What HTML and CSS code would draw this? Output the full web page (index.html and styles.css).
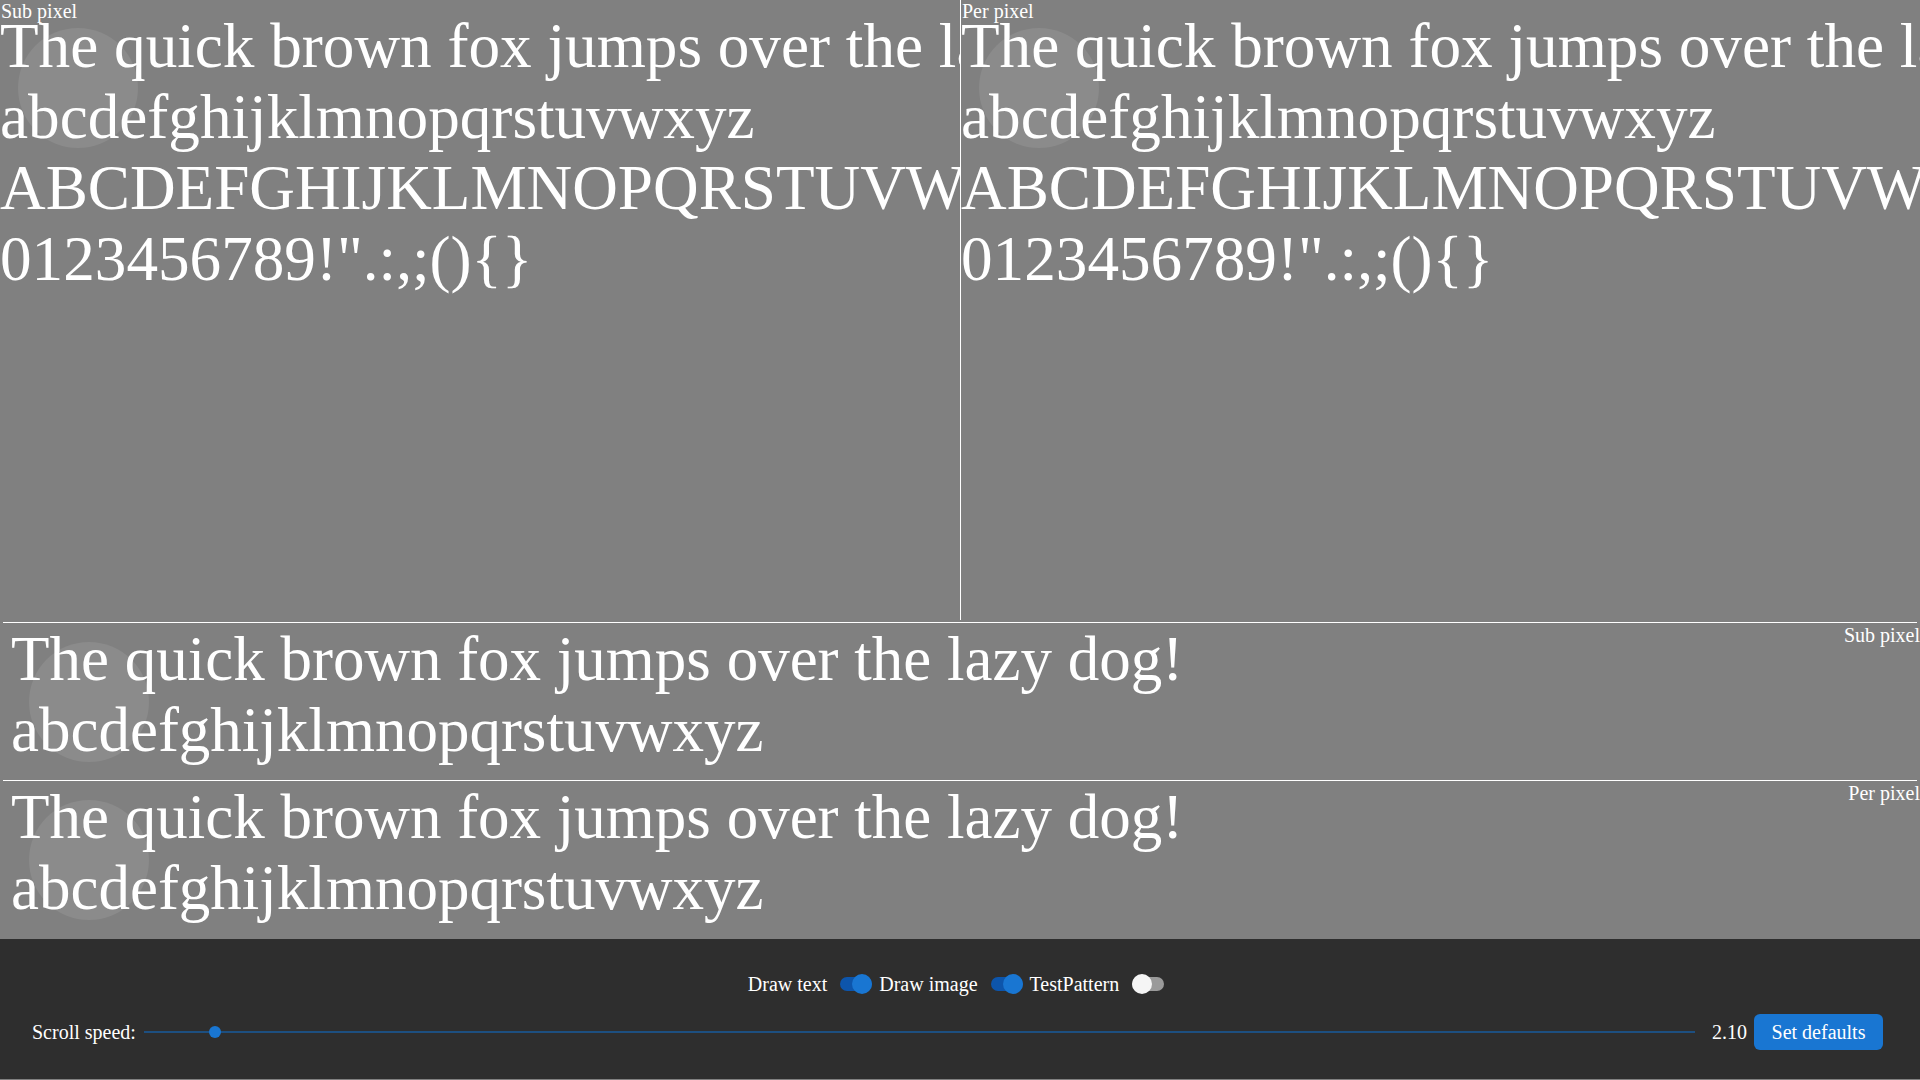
FILE: index.html
```html
<!DOCTYPE html>
<html lang="en">
<head>
<meta charset="utf-8">
<title>Text rendering test</title>
<link rel="stylesheet" href="styles.css">
</head>
<body>
<div class="page">
  <div class="top">
    <div class="panel panel-left">
      <div class="circle circle-top"></div>
      <div class="label">Sub pixel</div>
      <div class="big">
        <div class="line">The quick brown fox jumps over the lazy dog!</div>
        <div class="line">abcdefghijklmnopqrstuvwxyz</div>
        <div class="line">ABCDEFGHIJKLMNOPQRSTUVWXYZ</div>
        <div class="line">0123456789!".:,;(){}</div>
      </div>
    </div>
    <div class="panel panel-right">
      <div class="circle circle-top"></div>
      <div class="label">Per pixel</div>
      <div class="big">
        <div class="line">The quick brown fox jumps over the lazy dog!</div>
        <div class="line">abcdefghijklmnopqrstuvwxyz</div>
        <div class="line">ABCDEFGHIJKLMNOPQRSTUVWXYZ</div>
        <div class="line">0123456789!".:,;(){}</div>
      </div>
    </div>
  </div>

  <div class="strip strip-first">
    <div class="rule"></div>
    <div class="strip-body">
      <div class="circle circle-strip"></div>
      <div class="label label-right">Sub pixel</div>
      <div class="big big-strip">
        <div class="line">The quick brown fox jumps over the lazy dog!</div>
        <div class="line">abcdefghijklmnopqrstuvwxyz</div>
      </div>
    </div>
  </div>

  <div class="strip">
    <div class="rule"></div>
    <div class="strip-body">
      <div class="circle circle-strip"></div>
      <div class="label label-right">Per pixel</div>
      <div class="big big-strip">
        <div class="line">The quick brown fox jumps over the lazy dog!</div>
        <div class="line">abcdefghijklmnopqrstuvwxyz</div>
      </div>
    </div>
  </div>

  <div class="controls">
    <div class="toggles">
      <span class="toggle-label">Draw text</span>
      <span class="switch on"><span class="track"></span><span class="thumb"></span></span>
      <span class="toggle-label">Draw image</span>
      <span class="switch on"><span class="track"></span><span class="thumb"></span></span>
      <span class="toggle-label">TestPattern</span>
      <span class="switch off"><span class="track"></span><span class="thumb"></span></span>
    </div>
    <div class="speed-row">
      <span class="speed-label">Scroll speed:</span>
      <div class="slider">
        <div class="slider-track"></div>
        <div class="slider-thumb" style="left: 4.6%"></div>
      </div>
      <span class="speed-value">2.10</span>
      <button class="btn">Set defaults</button>
    </div>
  </div>
</div>
</body>
</html>
```

FILE: styles.css
```css
html, body {
  margin: 0;
  padding: 0;
}

body {
  background: #808080;
  font-family: "Liberation Serif", "Times New Roman", serif;
  color: #ffffff;
  width: 1920px;
  height: 1080px;
  overflow: hidden;
}

.page {
  display: flex;
  flex-direction: column;
  height: 1080px;
}

.top {
  display: flex;
  height: 620px;
  flex: none;
}

.panel {
  position: relative;
  overflow: hidden;
  height: 620px;
}

.panel-left {
  width: 960px;
  border-right: 1px solid #ffffff;
  box-sizing: content-box;
}

.panel-right {
  flex: 1;
}

.label {
  position: absolute;
  top: 0;
  left: 1px;
  font-size: 20px;
  line-height: 23px;
  white-space: nowrap;
  z-index: 2;
}

.label-right {
  left: auto;
  right: 0;
  top: 1px;
}

.big {
  position: relative;
  z-index: 1;
  padding-top: 11px;
  font-size: 63.2px;
  line-height: 71px;
}

.line {
  white-space: nowrap;
  height: 71px;
}

.circle {
  position: absolute;
  width: 120px;
  height: 120px;
  border-radius: 50%;
  background: rgba(255, 255, 255, 0.085);
  z-index: 0;
}

.circle-top {
  left: 18px;
  top: 28px;
}

.strip {
  flex: none;
  height: 158px;
  display: flex;
  flex-direction: column;
}

.strip-first {
  margin-top: 2px;
}

.rule {
  height: 1px;
  background: #ffffff;
  margin: 0 3px 0 3px;
  flex: none;
}

.strip-body {
  position: relative;
  flex: 1;
  overflow: hidden;
}

.big-strip {
  padding-top: 1px;
  padding-left: 11px;
  font-size: 63px;
}

.circle-strip {
  left: 29px;
  top: 19px;
}

.controls {
  margin-top: 1px;
  height: 140px;
  flex: none;
  background: #2e2e2e;
  box-sizing: border-box;
  padding-top: 35px;
  display: flex;
  flex-direction: column;
  gap: 20px;
}

.toggles {
  display: flex;
  justify-content: center;
  align-items: center;
  height: 20px;
  font-size: 20px;
  padding-right: 8px;
}

.toggle-label {
  margin-right: 13px;
  line-height: 23px;
}

.switch {
  position: relative;
  display: inline-block;
  width: 32px;
  height: 20px;
  margin-right: 7px;
}

.switch:last-child {
  margin-right: 0;
}

.track {
  position: absolute;
  left: 0;
  right: 0;
  top: 3px;
  height: 14px;
  border-radius: 7px;
}

.thumb {
  position: absolute;
  top: 0;
  width: 20px;
  height: 20px;
  border-radius: 50%;
}

.switch.on .track {
  background: #0d55ab;
}

.switch.on .thumb {
  right: 0;
  background: #1976d2;
}

.switch.off .track {
  background: #9a9a9a;
}

.switch.off .thumb {
  left: 0;
  background: #f5f5f5;
}

.speed-row {
  display: flex;
  align-items: center;
  height: 36px;
  padding-left: 32px;
  padding-right: 37px;
  font-size: 20px;
}

.speed-label {
  margin-right: 8px;
  white-space: nowrap;
}

.slider {
  position: relative;
  flex: 1;
  height: 12px;
}

.slider-track {
  position: absolute;
  left: 0;
  right: 0;
  top: 5px;
  height: 2px;
  background: #1d4f80;
}

.slider-thumb {
  position: absolute;
  top: 0;
  width: 12px;
  height: 12px;
  margin-left: -6px;
  border-radius: 50%;
  background: #1976d2;
}

.speed-value {
  margin-left: 17px;
  margin-right: 7px;
}

.btn {
  font-family: "Liberation Serif", "Times New Roman", serif;
  font-size: 20px;
  color: #ffffff;
  background: #1976d2;
  border: none;
  border-radius: 6px;
  height: 36px;
  width: 129px;
  padding: 0;
}
```
